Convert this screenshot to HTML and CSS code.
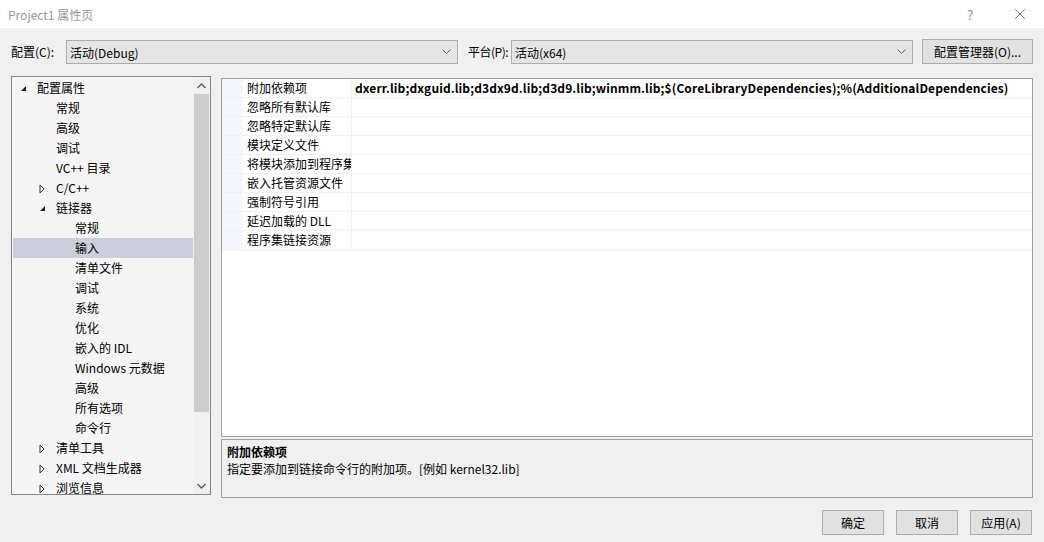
FILE: index.html
```html
<!DOCTYPE html>
<html lang="zh-CN">
<head>
    <meta charset="UTF-8">
    <title>Project1 属性页</title>
    <link rel="stylesheet" href="styles.css">
</head>
<body>
    <div class="titlebar">
        <span class="title">Project1 属性页</span>
        <span class="help">?</span>
        <span class="close">
            <svg width="12" height="12" viewBox="0 0 12 12"><path d="M1 1 L11 11 M11 1 L1 11" stroke="#7a7a7a" stroke-width="1" fill="none"/></svg>
        </span>
    </div>

    <div class="dialog">
        <div class="config-row">
            <label class="cfg-label first">配置(C):</label>
            <div class="combo combo-config">
                <span>活动(Debug)</span>
                <svg class="chev" width="9" height="6" viewBox="0 0 9 6"><path d="M0.5 0.5 L4.5 4.5 L8.5 0.5" stroke="#606060" fill="none"/></svg>
            </div>
            <label class="cfg-label second">平台(P):</label>
            <div class="combo combo-platform">
                <span>活动(x64)</span>
                <svg class="chev" width="9" height="6" viewBox="0 0 9 6"><path d="M0.5 0.5 L4.5 4.5 L8.5 0.5" stroke="#606060" fill="none"/></svg>
            </div>
            <button class="btn btn-manager">配置管理器(O)...</button>
        </div>

        <div class="main">
            <div class="tree">
                <div class="tree-list">
                    <div class="node lv0"><span class="tw"><svg width="7" height="7" viewBox="0 0 7 7"><polygon points="6,1 6,6 1,6" fill="#1e1e1e"/></svg></span>配置属性</div>
                    <div class="node lv1"><span class="tw"></span>常规</div>
                    <div class="node lv1"><span class="tw"></span>高级</div>
                    <div class="node lv1"><span class="tw"></span>调试</div>
                    <div class="node lv1"><span class="tw"></span>VC++ 目录</div>
                    <div class="node lv1"><span class="tw"><svg width="6" height="10" viewBox="0 0 6 10"><polygon points="1,1 5,5 1,9" fill="none" stroke="#333" stroke-width="1"/></svg></span>C/C++</div>
                    <div class="node lv1"><span class="tw"><svg width="7" height="7" viewBox="0 0 7 7"><polygon points="6,1 6,6 1,6" fill="#1e1e1e"/></svg></span>链接器</div>
                    <div class="node lv2"><span class="tw"></span>常规</div>
                    <div class="node lv2 selected"><span class="tw"></span>输入</div>
                    <div class="node lv2"><span class="tw"></span>清单文件</div>
                    <div class="node lv2"><span class="tw"></span>调试</div>
                    <div class="node lv2"><span class="tw"></span>系统</div>
                    <div class="node lv2"><span class="tw"></span>优化</div>
                    <div class="node lv2"><span class="tw"></span>嵌入的 IDL</div>
                    <div class="node lv2"><span class="tw"></span>Windows 元数据</div>
                    <div class="node lv2"><span class="tw"></span>高级</div>
                    <div class="node lv2"><span class="tw"></span>所有选项</div>
                    <div class="node lv2"><span class="tw"></span>命令行</div>
                    <div class="node lv1"><span class="tw"><svg width="6" height="10" viewBox="0 0 6 10"><polygon points="1,1 5,5 1,9" fill="none" stroke="#333" stroke-width="1"/></svg></span>清单工具</div>
                    <div class="node lv1"><span class="tw"><svg width="6" height="10" viewBox="0 0 6 10"><polygon points="1,1 5,5 1,9" fill="none" stroke="#333" stroke-width="1"/></svg></span>XML 文档生成器</div>
                    <div class="node lv1"><span class="tw"><svg width="6" height="10" viewBox="0 0 6 10"><polygon points="1,1 5,5 1,9" fill="none" stroke="#333" stroke-width="1"/></svg></span>浏览信息</div>
                </div>
                <div class="scrollbar">
                    <div class="sb-arrow">
                        <svg width="9" height="6" viewBox="0 0 9 6"><path d="M0.5 5 L4.5 1 L8.5 5" stroke="#606060" stroke-width="1.4" fill="none"/></svg>
                    </div>
                    <div class="sb-track">
                        <div class="sb-thumb"></div>
                    </div>
                    <div class="sb-arrow">
                        <svg width="9" height="6" viewBox="0 0 9 6"><path d="M0.5 1 L4.5 5 L8.5 1" stroke="#606060" stroke-width="1.4" fill="none"/></svg>
                    </div>
                </div>
            </div>

            <div class="right">
                <div class="grid">
                    <div class="prop"><span class="gutter"></span><span class="name">附加依赖项</span><span class="value bold">dxerr.lib;dxguid.lib;d3dx9d.lib;d3d9.lib;winmm.lib;$(CoreLibraryDependencies);%(AdditionalDependencies)</span></div>
                    <div class="prop"><span class="gutter"></span><span class="name">忽略所有默认库</span><span class="value"></span></div>
                    <div class="prop"><span class="gutter"></span><span class="name">忽略特定默认库</span><span class="value"></span></div>
                    <div class="prop"><span class="gutter"></span><span class="name">模块定义文件</span><span class="value"></span></div>
                    <div class="prop"><span class="gutter"></span><span class="name">将模块添加到程序集</span><span class="value"></span></div>
                    <div class="prop"><span class="gutter"></span><span class="name">嵌入托管资源文件</span><span class="value"></span></div>
                    <div class="prop"><span class="gutter"></span><span class="name">强制符号引用</span><span class="value"></span></div>
                    <div class="prop"><span class="gutter"></span><span class="name">延迟加载的 DLL</span><span class="value"></span></div>
                    <div class="prop"><span class="gutter"></span><span class="name">程序集链接资源</span><span class="value"></span></div>
                </div>
                <div class="desc">
                    <div class="desc-title">附加依赖项</div>
                    <div class="desc-text">指定要添加到链接命令行的附加项。[例如 kernel32.lib]</div>
                </div>
            </div>
        </div>

        <div class="buttons">
            <button class="btn btn-action">确定</button>
            <button class="btn btn-action">取消</button>
            <button class="btn btn-action">应用(A)</button>
        </div>
    </div>
</body>
</html>
```

FILE: styles.css
```css
body {
    margin: 0;
    width: 1044px;
    height: 542px;
    overflow: hidden;
    background-color: #f0f0f0;
    font-family: "Noto Sans CJK SC", "Noto Sans", sans-serif;
    font-size: 12px;
    color: #000;
}

/* 标题栏 */
.titlebar {
    height: 28px;
    background-color: #fff;
    display: flex;
    align-items: center;
    padding-left: 8px;
}
.title {
    color: #999;
    font-size: 12px;
    flex: 1;
}
.help {
    color: #8a8a8a;
    font-size: 13px;
    width: 14px;
    margin-right: 37px;
    text-align: center;
}
.close {
    display: flex;
    width: 12px;
    margin-right: 18px;
}

.dialog {
    padding: 12px 11px 0 11px;
}

/* 配置 / 平台 */
.config-row {
    display: flex;
    align-items: center;
    height: 24px;
}
.cfg-label {
    line-height: 24px;
    white-space: nowrap;
    flex-shrink: 0;
}
.cfg-label.first {
    width: 55px;
}
.cfg-label.second {
    width: 43px;
    margin-left: 10px;
    letter-spacing: -0.5px;
}
.combo {
    box-sizing: border-box;
    height: 24px;
    flex-shrink: 0;
    background-color: #e5e5e5;
    border: 1px solid #adadad;
    display: flex;
    align-items: center;
    padding: 0 5px 0 3px;
}
.combo span {
    flex: 1;
}
.combo-config {
    width: 392px;
}
.combo-platform {
    width: 402px;
}
.chev {
    margin-right: 1px;
}
.btn {
    box-sizing: border-box;
    background-color: #e1e1e1;
    border: 1px solid #adadad;
    font-family: "Noto Sans CJK SC", "Noto Sans", sans-serif;
    font-size: 12px;
    color: #000;
    padding: 0;
}
.btn-manager {
    width: 111px;
    height: 25px;
    flex-shrink: 0;
    margin-left: 9px;
    margin-top: -1px;
}

/* 主体 */
.main {
    display: flex;
    margin-top: 12px;
}
.tree {
    box-sizing: border-box;
    width: 200px;
    height: 419px;
    border: 1px solid #828790;
    background-color: #f5f5f5;
    display: flex;
}
.tree-list {
    flex: 1;
    padding: 1px 0 0 1px;
    overflow: hidden;
}
.node {
    height: 20px;
    line-height: 20px;
    display: flex;
    align-items: center;
    white-space: nowrap;
}
.node.selected {
    background-color: #cccedb;
}
.tw {
    width: 17px;
    height: 20px;
    display: flex;
    align-items: center;
}
.tw svg {
    margin-top: 1px;
}
.lv0 { padding-left: 7px; }
.lv1 { padding-left: 26px; }
.lv2 { padding-left: 45px; }

.scrollbar {
    width: 17px;
    display: flex;
    flex-direction: column;
    background-color: #f0f0f0;
}
.sb-arrow {
    height: 17px;
    display: flex;
    align-items: center;
    justify-content: center;
}
.sb-track {
    flex: 1;
    padding: 0 1px 0 1px;
}
.sb-thumb {
    height: 318px;
    background-color: #cdcdcd;
}

.right {
    margin-left: 10px;
    width: 812px;
    display: flex;
    flex-direction: column;
    margin-top: 2px;
}
.grid {
    box-sizing: border-box;
    height: 359px;
    border: 1px solid #a0a0a0;
    background-color: #fff;
}
.prop {
    display: flex;
    height: 19px;
    box-sizing: border-box;
    border-bottom: 1px solid #eff1f6;
    line-height: 18px;
}
.gutter {
    width: 21px;
    background-color: #f5f7fc;
}
.name {
    box-sizing: border-box;
    width: 109px;
    padding-left: 4px;
    border-right: 1px solid #eff1f6;
    white-space: nowrap;
    overflow: hidden;
}
.value {
    flex: 1;
    padding-left: 3px;
    white-space: nowrap;
    overflow: hidden;
}
.bold {
    font-weight: bold;
    letter-spacing: 0.1px;
}

.desc {
    box-sizing: border-box;
    margin-top: 2px;
    height: 59px;
    border: 1px solid #a0a0a0;
    background-color: #f0f0f0;
    padding: 3px 5px 0 5px;
    line-height: 17px;
}
.desc-title {
    font-weight: bold;
}

.buttons {
    display: flex;
    justify-content: flex-end;
    gap: 12px;
    margin-top: 12px;
    padding-right: 1px;
}
.btn-action {
    width: 62px;
    height: 25px;
}
```
